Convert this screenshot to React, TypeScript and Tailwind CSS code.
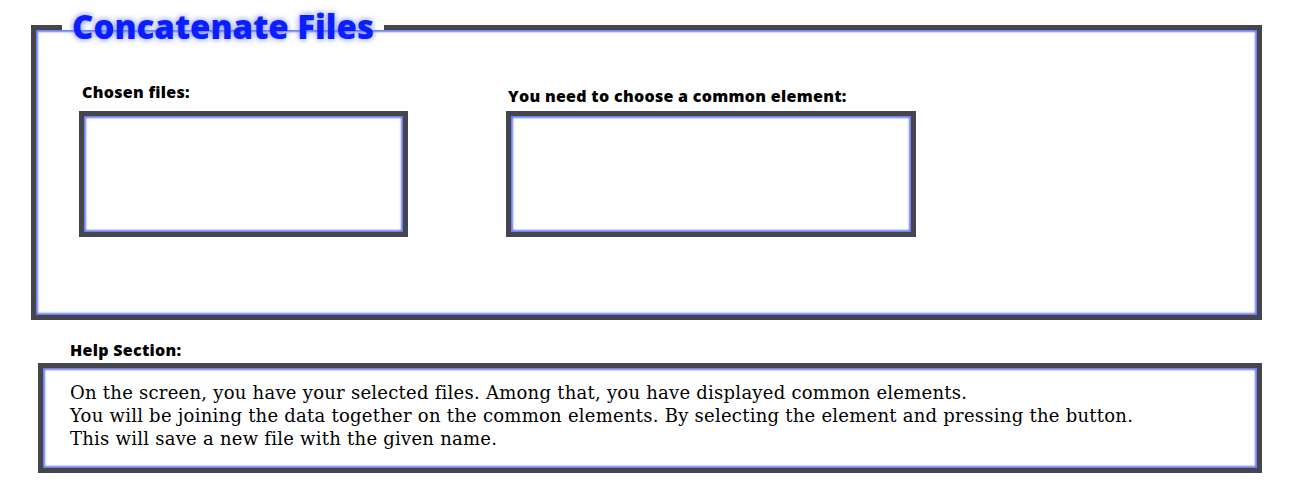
export default function App() {
  return (
    <div className="w-[1300px] h-[500px] bg-white pl-[31px] pr-[38px] pt-[7px] font-['Open_Sans',sans-serif]">
      <fieldset className="border-[5px] border-[#45454d] shadow-[inset_0_0_2px_2px_#6c7cf0] h-[313px]">
        <legend className="ml-[26px] px-[10px] text-[33px] leading-[40px] font-extrabold text-[#0a1eff] [text-shadow:0_0_6px_#6b7bff]">
          Concatenate Files
        </legend>
        <div className="flex gap-[98px] mt-[35px] pl-[43px]">
          <div className="flex flex-col">
            <span className="text-[16px] font-extrabold tracking-[0.3px] text-black leading-[20px] pl-[3px] mb-[9px]">
              Chosen files:
            </span>
            <div className="w-[329px] h-[126px] border-[5px] border-[#45454d] shadow-[inset_0_0_2px_2px_#6c7cf0] bg-white" />
          </div>
          <div className="flex flex-col">
            <span className="text-[16px] font-extrabold tracking-[0.3px] text-black leading-[20px] pl-[2px] mt-[4px] mb-[5px]">
              You need to choose a common element:
            </span>
            <div className="w-[410px] h-[126px] border-[5px] border-[#45454d] shadow-[inset_0_0_2px_2px_#6c7cf0] bg-white" />
          </div>
        </div>
      </fieldset>
      <div className="pl-[7px] mt-[20px]">
        <div className="text-[16px] font-extrabold tracking-[0.3px] text-black leading-[20px] pl-[32px] mb-[3px]">
          Help Section:
        </div>
        <div className="h-[110px] border-[5px] border-[#45454d] shadow-[inset_0_0_2px_2px_#6c7cf0] bg-white pl-[27px] pt-[13px] font-['DejaVu_Serif',serif] text-[18px] tracking-[0.25px] leading-[23px] text-black">
          On the screen, you have your selected files. Among that, you have displayed common elements.
          <br />
          You will be joining the data together on the common elements. By selecting the element and pressing the button.
          <br />
          This will save a new file with the given name.
        </div>
      </div>
    </div>
  );
}
